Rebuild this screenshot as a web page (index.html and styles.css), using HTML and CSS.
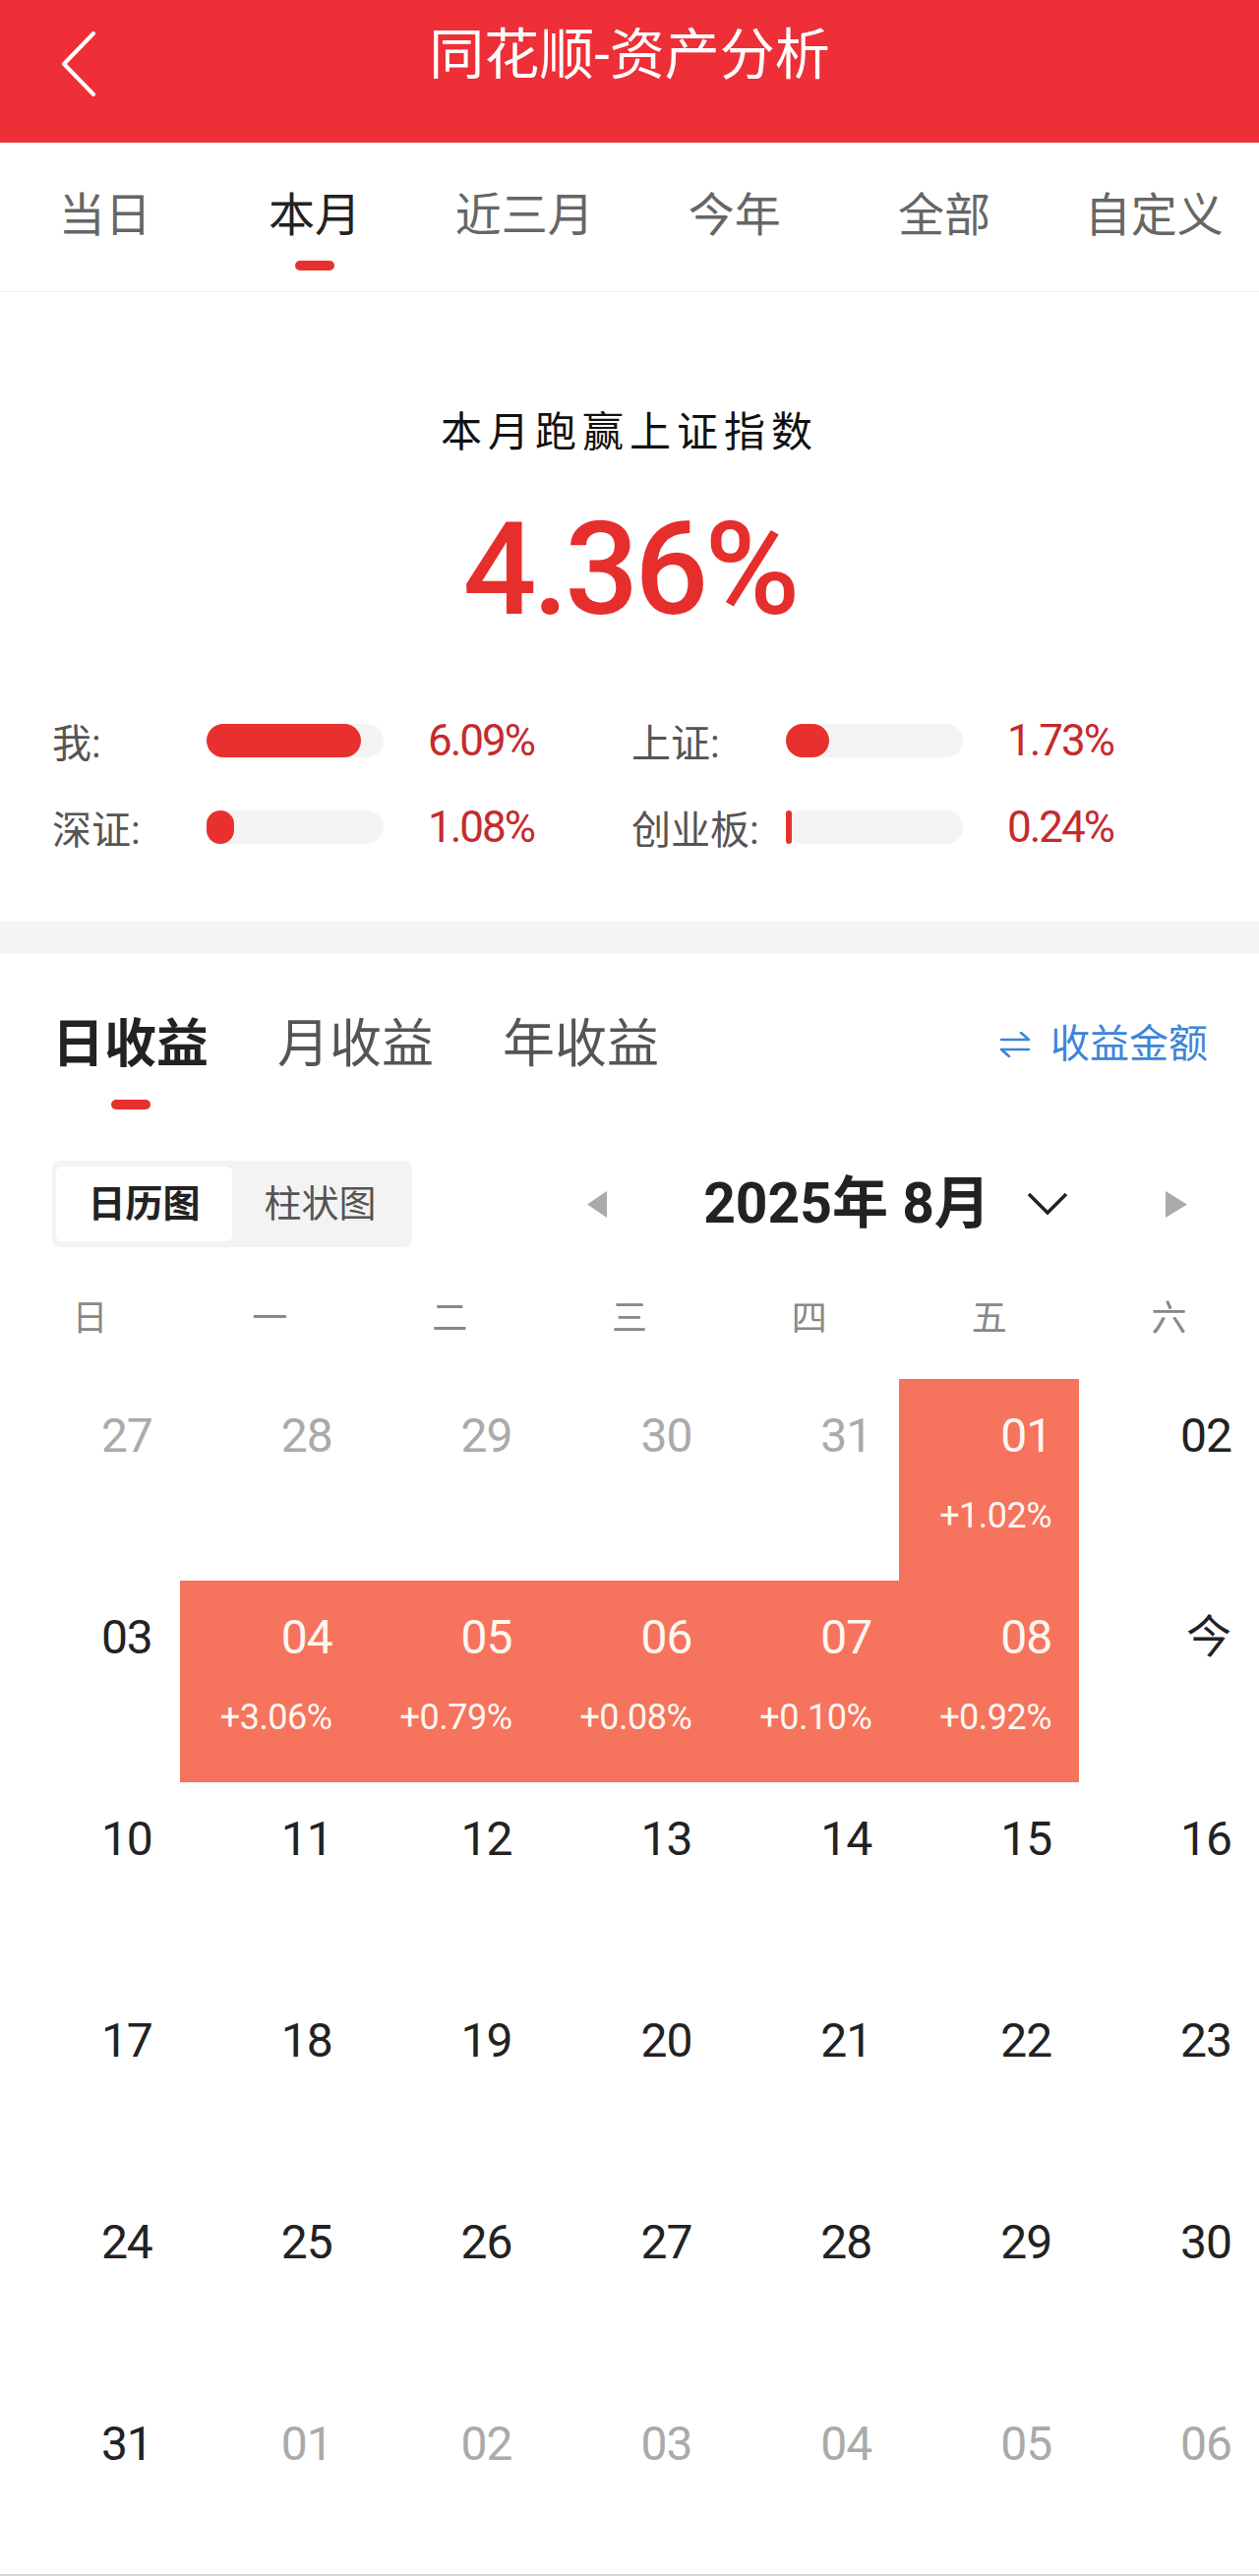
FILE: index.html
```html
<!DOCTYPE html>
<html lang="zh-CN">
<head>
  <meta charset="UTF-8">
  <title>同花顺-资产分析</title>
  <link rel="stylesheet" href="styles.css">
</head>
<body>
  <div class="page">
    <header class="topbar">
      <a class="back">
        <svg width="40" height="66" viewBox="0 0 40 66"><polyline points="35,2 5,33 35,64" fill="none" stroke="#fff" stroke-width="4" stroke-linecap="round" stroke-linejoin="round"/></svg>
      </a>
      <h1 class="title">同花顺-资产分析</h1>
    </header>

    <!-- 时间区间 -->
    <nav class="period-tabs">
      <div class="period">当日</div>
      <div class="period active">本月<i></i></div>
      <div class="period">近三月</div>
      <div class="period">今年</div>
      <div class="period">全部</div>
      <div class="period">自定义</div>
    </nav>

    <section class="summary">
      <div class="summary-title">本月跑赢上证指数</div>
      <div class="summary-value">4.36%</div>
      <div class="bench-grid">
        <div class="bench">
          <span class="bench-label">我:</span>
          <span class="track"><i class="fill" style="width: 87%"></i></span>
          <span class="bench-value">6.09%</span>
        </div>
        <div class="bench">
          <span class="bench-label">上证:</span>
          <span class="track"><i class="fill" style="width: 24.7%"></i></span>
          <span class="bench-value">1.73%</span>
        </div>
        <div class="bench">
          <span class="bench-label">深证:</span>
          <span class="track"><i class="fill" style="width: 15.4%"></i></span>
          <span class="bench-value">1.08%</span>
        </div>
        <div class="bench">
          <span class="bench-label">创业板:</span>
          <span class="track"><i class="fill" style="width: 3.4%"></i></span>
          <span class="bench-value">0.24%</span>
        </div>
      </div>
    </section>

    <div class="gap"></div>

    <section class="profit">
      <div class="profit-head">
        <div class="profit-tab active">日收益<i></i></div>
        <div class="profit-tab">月收益</div>
        <div class="profit-tab">年收益</div>
        <a class="amount-switch">
          <svg width="32" height="26" viewBox="0 0 32 26"><path d="M2 8 H30 L22 1 M30 18 H2 L10 25" fill="none" stroke="#3d85d8" stroke-width="2.6" stroke-linecap="round" stroke-linejoin="round"/></svg>
          收益金额
        </a>
      </div>

      <div class="cal-toolbar">
        <div class="seg">
          <span class="seg-item on">日历图</span>
          <span class="seg-item">柱状图</span>
        </div>
        <div class="month-nav">
          <svg width="20" height="27" viewBox="0 0 20 27"><polygon points="20,0 20,27 0,13.5" fill="#aaa"/></svg>
          <div class="month">
            <span>2025年 8月</span>
            <svg width="44" height="26" viewBox="0 0 44 26"><polyline points="3,3 22,22 41,3" fill="none" stroke="#222" stroke-width="3.5"/></svg>
          </div>
          <svg width="22" height="27" viewBox="0 0 22 27"><polygon points="0,0 0,27 22,13.5" fill="#aaa"/></svg>
        </div>
      </div>

      <div class="weekdays">
        <span>日</span><span>一</span><span>二</span><span>三</span><span>四</span><span>五</span><span>六</span>
      </div>

      <div class="calendar">
        <div class="day other">27</div>
        <div class="day other">28</div>
        <div class="day other">29</div>
        <div class="day other">30</div>
        <div class="day other">31</div>
        <div class="day up">01<span class="pct">+1.02%</span></div>
        <div class="day">02</div>

        <div class="day">03</div>
        <div class="day up">04<span class="pct">+3.06%</span></div>
        <div class="day up">05<span class="pct">+0.79%</span></div>
        <div class="day up">06<span class="pct">+0.08%</span></div>
        <div class="day up">07<span class="pct">+0.10%</span></div>
        <div class="day up">08<span class="pct">+0.92%</span></div>
        <div class="day today">今</div>

        <div class="day">10</div>
        <div class="day">11</div>
        <div class="day">12</div>
        <div class="day">13</div>
        <div class="day">14</div>
        <div class="day">15</div>
        <div class="day">16</div>

        <div class="day">17</div>
        <div class="day">18</div>
        <div class="day">19</div>
        <div class="day">20</div>
        <div class="day">21</div>
        <div class="day">22</div>
        <div class="day">23</div>

        <div class="day">24</div>
        <div class="day">25</div>
        <div class="day">26</div>
        <div class="day">27</div>
        <div class="day">28</div>
        <div class="day">29</div>
        <div class="day">30</div>

        <div class="day">31</div>
        <div class="day other">01</div>
        <div class="day other">02</div>
        <div class="day other">03</div>
        <div class="day other">04</div>
        <div class="day other">05</div>
        <div class="day other">06</div>
      </div>
    </section>
  </div>
</body>
</html>
```

FILE: styles.css
```css
body {
  margin: 0;
  font-family: Roboto, "Noto Sans CJK SC", sans-serif;
  background-color: #fff;
  color: #222;
}
.page {
  height: 2619px;
  overflow: hidden;
  box-sizing: border-box;
  border-bottom: 2px solid #d6d6d6;
}

/* 顶栏 */
.topbar {
  height: 145px;
  background-color: #ee2f37;
  display: grid;
  grid-template-columns: 1fr auto 1fr;
  align-items: start;
}
.back {
  justify-self: start;
  margin: 32px 0 0 60px;
  line-height: 0;
}
.title {
  margin: 24px 0 0;
  color: #fff;
  font-size: 56px;
  font-weight: 400;
  line-height: 64px;
}

.period-tabs {
  height: 152px;
  box-sizing: border-box;
  border-bottom: 1px solid #eee;
  display: grid;
  grid-template-columns: repeat(6, 1fr);
}
.period {
  display: flex;
  flex-direction: column;
  align-items: center;
  padding-top: 49px;
  font-size: 47px;
  line-height: 50px;
  color: #666;
}
.period.active {
  color: #222;
}
.period i {
  width: 40px;
  height: 10px;
  margin-top: 21px;
  border-radius: 5px;
  background-color: #e8302f;
}

.summary {
  height: 640px;
  box-sizing: border-box;
  padding-top: 118px;
  text-align: center;
}
.summary-title {
  font-size: 42px;
  line-height: 50px;
  letter-spacing: 6px;
  color: #111;
}
.summary-value {
  margin-top: 48px;
  font-size: 132px;
  line-height: 1;
  font-weight: 500;
  letter-spacing: -4px;
  color: #e62e2d;
}
.bench-grid {
  margin-top: 86px;
  padding-left: 53px;
  display: grid;
  grid-template-columns: 589px 1fr;
  row-gap: 44px;
  text-align: left;
}
.bench {
  display: flex;
  align-items: center;
  height: 44px;
}
.bench-label {
  width: 157px;
  font-size: 40px;
  color: #555;
}
.track {
  width: 180px;
  height: 34px;
  border-radius: 17px;
  background-color: #f4f4f4;
  display: flex;
}
.fill {
  border-radius: 17px;
  background-color: #e8312f;
}
.bench-value {
  margin-left: 45px;
  font-size: 44px;
  letter-spacing: -2px;
  color: #c42b2d;
}

.gap {
  height: 33px;
  background-color: #f4f5f7;
}

.profit-head {
  display: flex;
  align-items: flex-start;
  gap: 70px;
  padding: 62px 52px 0 53px;
}
.profit-tab {
  display: flex;
  flex-direction: column;
  align-items: center;
  font-size: 53px;
  line-height: 60px;
  color: #555;
}
.profit-tab.active {
  font-weight: 700;
  color: #222;
}
.profit-tab i {
  width: 40px;
  height: 10px;
  margin-top: 26px;
  border-radius: 5px;
  background-color: #e8302f;
}
.amount-switch {
  margin-left: auto;
  display: flex;
  align-items: center;
  gap: 20px;
  font-size: 40px;
  line-height: 60px;
  color: #3d85d8;
}

.cal-toolbar {
  display: flex;
  align-items: center;
  margin-top: 52px;
  padding: 0 73px 0 53px;
}
.seg {
  display: flex;
  padding: 6px 4px;
  border-radius: 8px;
  background-color: #f3f3f3;
}
.seg-item {
  width: 179px;
  line-height: 76px;
  text-align: center;
  font-size: 38px;
  color: #555;
}
.seg-item.on {
  background-color: #fff;
  border-radius: 6px;
  font-weight: 700;
  color: #222;
}
.month-nav {
  flex: 1;
  margin-left: 178px;
  display: flex;
  align-items: center;
  justify-content: space-between;
}
.month {
  display: flex;
  align-items: center;
  gap: 36px;
  font-size: 57px;
  font-weight: 700;
  line-height: 64px;
  color: #222;
}

.weekdays {
  display: grid;
  grid-template-columns: repeat(7, 1fr);
  margin-top: 53px;
  text-align: center;
  font-size: 36px;
  line-height: 40px;
  color: #888;
}

.calendar {
  display: grid;
  grid-template-columns: repeat(7, 1fr);
  grid-auto-rows: 205px;
  margin-top: 41px;
}
.day {
  display: flex;
  flex-direction: column;
  align-items: flex-end;
  padding: 34px 28px 0 0;
  font-size: 48px;
  line-height: 1;
  letter-spacing: -1px;
  color: #222;
}
.day.other {
  color: #aaa;
}
.day.up {
  background-color: #f6735e;
  color: #fff7f0;
}
.day.today {
  font-size: 46px;
  letter-spacing: 0;
}
.pct {
  margin-top: 39px;
  font-size: 36px;
  letter-spacing: -0.5px;
}
```
